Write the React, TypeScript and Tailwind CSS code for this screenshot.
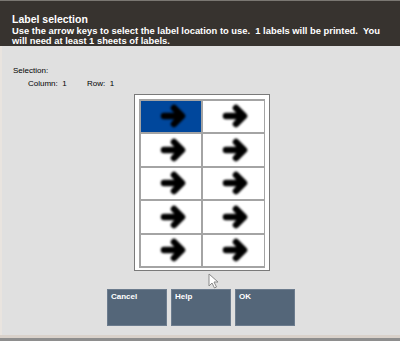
import React from "react";

function Arrow() {
  return (
    <svg width="30" height="30" viewBox="0 0 30 30" className="blur-[1px]">
      <path
        d="M5 15 H22 M15 7 L23 15 L15 23"
        fill="none"
        stroke="#000"
        strokeWidth="6.5"
        strokeLinecap="round"
        strokeLinejoin="round"
      />
    </svg>
  );
}

function Cursor() {
  return (
    <svg width="12" height="16" viewBox="0 0 12 16" className="absolute left-[208px] top-[273px]">
      <path d="M1 1 L1 13 L4 10 L6.5 15 L8.5 14 L6 9 L10 9 Z" fill="#fff" stroke="#888" strokeWidth="1" />
    </svg>
  );
}

export default function App() {
  const rows = [0, 1, 2, 3, 4];
  const btn =
    "w-[60px] h-[37px] bg-[#546679] border border-[#6c7c8e] px-[3px] pt-[2px] text-[8px] font-bold text-white leading-[10px]";

  return (
    <div className="relative w-[400px] h-[341px] flex flex-col bg-[#e0e0e0] font-['Liberation_Sans',Arial,sans-serif] overflow-hidden">
      {/* Header */}
      <div className="h-[46px] bg-[#37332f] border-t border-[#7a7772] px-[12px] pt-[12px] text-white font-bold">
        <div className="text-[10.5px] leading-[13px]">Label selection</div>
        <div className="text-[9.4px] leading-[10px] whitespace-pre">
          {"Use the arrow keys to select the label location to use.  1 labels will be printed.  You"}
          <br />
          {"will need at least 1 sheets of labels."}
        </div>
      </div>

      {/* Body */}
      <div className="flex-1 flex flex-col border-l-2 border-[#e9e4df]">
        <div className="pl-[11px] pt-[20px] text-[8px] leading-[10px] text-black">
          <div>Selection:</div>
          <div className="flex pl-[15px] mt-[3px]">
            <span className="w-[59px]">Column:&nbsp; 1</span>
            <span>Row:&nbsp; 1</span>
          </div>
        </div>

        <div className="flex justify-center pl-[2px] mt-[5px]">
          <div className="w-[136px] h-[177px] bg-white border border-[#7a7a7a] p-[4px]">
            <div className="grid grid-cols-2 gap-[2px] bg-[#a4a4a4] p-[0.5px] border border-[#a4a4a4]">
              {rows.map((r) =>
                [0, 1].map((c) => (
                  <div
                    key={`${r}-${c}`}
                    className={`h-[31.5px] flex items-center justify-center pl-[6px] ${
                      r === 0 && c === 0 ? "bg-[#00479c]" : "bg-white"
                    }`}
                  >
                    <Arrow />
                  </div>
                ))
              )}
            </div>
          </div>
        </div>

        <div className="flex gap-[4px] pl-[105px] mt-[18px]">
          <div className={btn}>Cancel</div>
          <div className={btn}>Help</div>
          <div className={btn}>OK</div>
        </div>
      </div>

      {/* Bottom strip */}
      <div className="h-[3px] bg-[#d9d1ca]" />
      <div className="h-[3px] bg-[#8e8e8e]" />

      <Cursor />
    </div>
  );
}
